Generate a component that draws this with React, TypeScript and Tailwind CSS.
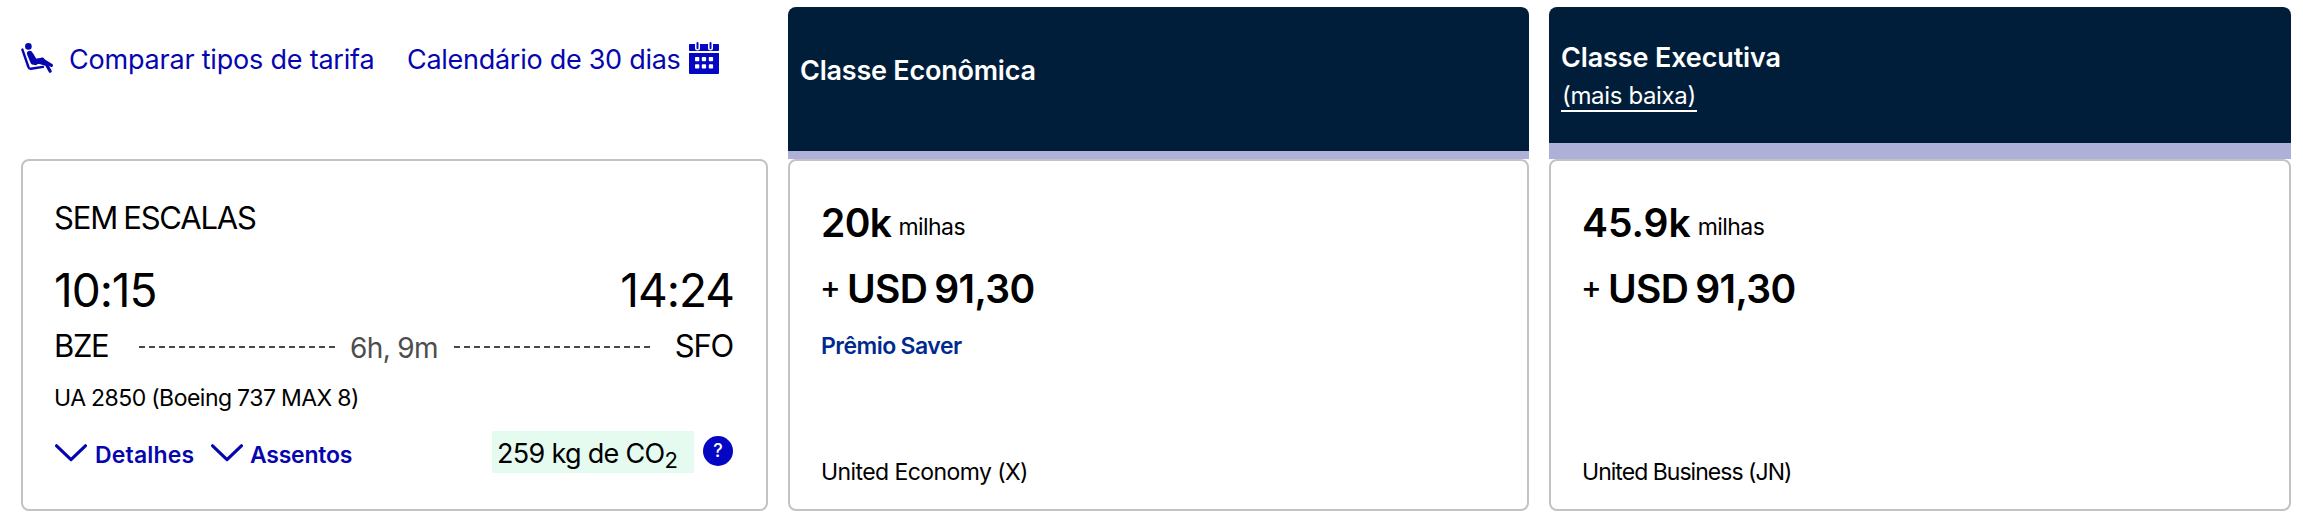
import type { ReactNode } from "react";

function SeatIcon() {
  return (
    <svg width="33" height="31" viewBox="0 0 33 31" fill="none" stroke="currentColor" strokeLinecap="round" strokeLinejoin="round">
      <circle cx="7.4" cy="3.4" r="3.3" fill="currentColor" stroke="none" />
      <path d="M1.4 6.6 7.4 24q.6 1.9 2.6 1.7L22 23.9" strokeWidth="2.4" />
      <path d="M8.8 10.6 12.2 19 21 17.4" strokeWidth="5.6" />
      <path d="M20.6 16.4 30.4 22.4" strokeWidth="3.2" />
      <path d="M19 19.4 25.4 21.4 29.2 28.2" strokeWidth="3.2" />
      <path d="M10.5 12.5 14.5 19.6" strokeWidth="5" />
    </svg>
  );
}

function CalendarIcon() {
  return (
    <svg width="30" height="32" viewBox="0 0 30 32" fill="currentColor">
      <rect x="0" y="2" width="30" height="7" rx="0.8" />
      <path d="M0 11h30v20a1 1 0 0 1-1 1H1a1 1 0 0 1-1-1z" />
      <g fill="#fff">
        <rect x="6" y="0" width="5" height="8.6" rx="2.5" />
        <rect x="19" y="0" width="5" height="8.6" rx="2.5" />
        <rect x="6" y="15" width="4.3" height="4.3" rx="0.8" />
        <rect x="12.8" y="15" width="4.3" height="4.3" rx="0.8" />
        <rect x="19.8" y="15" width="4.3" height="4.3" rx="0.8" />
        <rect x="6" y="22.2" width="4.3" height="4.3" rx="0.8" />
        <rect x="12.8" y="22.2" width="4.3" height="4.3" rx="0.8" />
        <rect x="19.8" y="22.2" width="4.3" height="4.3" rx="0.8" />
      </g>
      <rect x="7.5" y="0" width="2" height="7.2" rx="1" />
      <rect x="20.5" y="0" width="2" height="7.2" rx="1" />
    </svg>
  );
}

function Chevron() {
  return (
    <svg width="32" height="18" viewBox="0 0 32 18" fill="none" stroke="currentColor" strokeWidth="3.2" strokeLinecap="round" strokeLinejoin="round">
      <path d="M1.6 1.8 16 15.6 30.4 1.8" />
    </svg>
  );
}

function Dashes() {
  return (
    <svg width="196" height="2" className="mt-[20px] shrink-0" stroke="#474747" strokeWidth="2">
      <path d="M0 1h196" strokeDasharray="6 4" />
    </svg>
  );
}

function FareColumn(props: { header: ReactNode; accent: string; miles: ReactNode; tag?: string; cabin: ReactNode }) {
  return (
    <section className="flex flex-col">
      <div className={`box-border h-[152px] rounded-t-lg bg-[#001e39] pl-[12px] text-white ${props.accent}`}>{props.header}</div>
      <div className="h-[352px] rounded-lg border-2 border-[#c3c3c3] bg-white pt-[40px] pl-[31px]">
        <div className="flex h-[44px] items-start leading-[44px]">
          {props.miles}
          <span className="mt-1 ml-[7px] text-[23px] tracking-[-0.56px]">milhas</span>
        </div>
        <div className="mt-[22px] flex h-[44px] items-start leading-[44px]">
          <span className="-mt-[2px] -ml-px w-[27px] text-[31px] font-medium">+</span>
          <span className="text-[39px] font-semibold tracking-[-0.6px] [word-spacing:-2.5px]">USD 91,30</span>
        </div>
        <div className="mt-[19px] h-[32px] text-[23px] leading-[32px] font-semibold tracking-[-0.5px] text-[#002a8f] [word-spacing:-0.5px]">{props.tag}</div>
        <div className="mt-[94px] text-[23px] leading-[32px]">{props.cabin}</div>
      </div>
    </section>
  );
}

export default function App() {
  return (
    <main className="grid h-[521px] w-[2303px] grid-cols-[747px_741px_742px] gap-x-5 overflow-hidden bg-white pt-[7px] pl-[21px] font-['Inter',sans-serif] text-black">
      <section className="flex flex-col">
        <nav className="flex h-[152px] items-start text-[#0606b0]">
          <a className="flex w-[386px] items-start">
            <span className="mt-[36px] w-[48px]">
              <SeatIcon />
            </span>
            <span className="mt-[35px] text-[27px] leading-[36px] tracking-[-0.21px] whitespace-nowrap">Comparar tipos de tarifa</span>
          </a>
          <a className="flex items-start">
            <span className="mt-[35px] w-[282px] text-[27px] leading-[36px] tracking-[-0.28px] whitespace-nowrap">Calendário de 30 dias</span>
            <span className="mt-[35px] text-[#0505c4]">
              <CalendarIcon />
            </span>
          </a>
        </nav>
        <div className="h-[352px] rounded-lg border-2 border-[#c3c3c3] pt-[37px] pr-[33px] pl-[31px]">
          <div className="text-[31px] leading-[40px] tracking-[-1.15px] [word-spacing:-1.5px]">SEM ESCALAS</div>
          <div className="mt-6 flex justify-between text-[46px] leading-[56px]">
            <span className="tracking-[-1.05px]">10:15</span>
            <span className="-mr-px tracking-[-1px]">14:24</span>
          </div>
          <div className="mt-2 flex h-[40px] items-start text-[31px] leading-[40px]">
            <span className="w-[85px] tracking-[-1.4px]">BZE</span>
            <Dashes />
            <span className="mt-[2px] w-[119px] pl-[15px] text-[28px] tracking-[-0.64px] whitespace-nowrap text-[#4d4d4d]">6h, 9m</span>
            <Dashes />
            <span className="ml-auto tracking-[-1.2px]">SFO</span>
          </div>
          <div className="mt-4 text-[23px] leading-[32px] tracking-[-0.5px] [word-spacing:-0.5px]">UA 2850 (Boeing 737 MAX 8)</div>
          <div className="mt-[17px] flex h-[42px] items-start">
            <a className="flex w-[156px] text-[#0606b0]">
              <span className="mt-[13px] ml-[1px] w-[40px]">
                <Chevron />
              </span>
              <span className="mt-[8px] text-[23px] leading-[32px] font-semibold tracking-[0.15px]">Detalhes</span>
            </a>
            <a className="flex text-[#0606b0]">
              <span className="mt-[13px] ml-[1px] w-[39px]">
                <Chevron />
              </span>
              <span className="mt-[8px] text-[23px] leading-[32px] font-semibold tracking-[-0.25px]">Assentos</span>
            </a>
            <div className="ml-auto flex h-[42px] w-[202px] items-start bg-[#e6fbf0] pl-[5px] text-[27px] leading-[46px] tracking-[-0.7px] whitespace-nowrap">
              259 kg de CO<span className="mt-[6px] text-[22px]">2</span>
            </div>
            <div className="mt-[5px] ml-[9px] flex size-[30px] items-center justify-center rounded-full bg-[#0505c4] text-[18px] leading-none font-medium text-white">?</div>
          </div>
        </div>
      </section>

      <FareColumn
        accent="border-b-8 border-[#aeb0d8]"
        header={<h2 className="pt-[46px] text-[27px] leading-[36px] font-semibold tracking-[-0.22px]">Classe Econômica</h2>}
        miles={<span className="text-[39px] font-semibold tracking-[-0.6px]">20k</span>}
        tag="Prêmio Saver"
        cabin={<span className="tracking-[-0.58px]">United Economy (X)</span>}
      />
      <FareColumn
        accent="border-b-16 border-[#aeb0d8]"
        header={
          <>
            <h2 className="pt-[33px] text-[27px] leading-[36px] font-semibold tracking-[-0.13px]">Classe Executiva</h2>
            <a className="mt-[4px] block h-[32px] w-fit border-b-2 border-white pr-px pl-px text-[24px] leading-[32px] tracking-[-0.35px]">(mais baixa)</a>
          </>
        }
        miles={<span className="text-[39px] font-semibold">45.9k</span>}
        cabin={<span className="tracking-[-0.97px]">United Business (JN)</span>}
      />
    </main>
  );
}
